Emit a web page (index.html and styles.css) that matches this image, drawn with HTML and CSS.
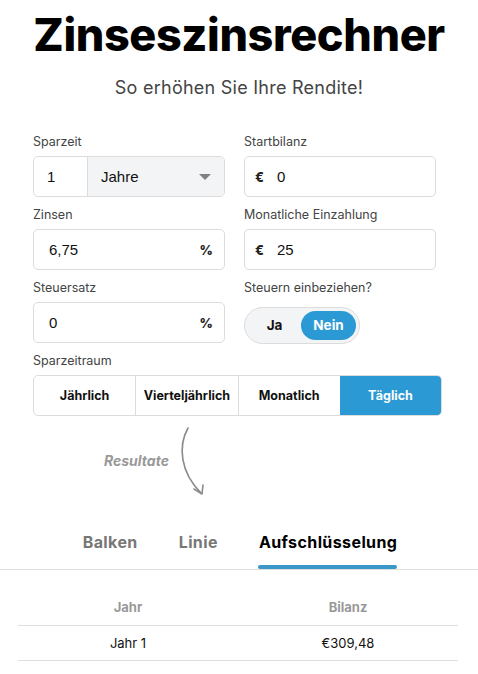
FILE: index.html
```html
<!DOCTYPE html>
<html lang="de">
<head>
<meta charset="utf-8">
<title>Zinseszinsrechner</title>
<link rel="stylesheet" href="styles.css">
</head>
<body>
<header class="head">
  <h1 class="title">Zinseszinsrechner</h1>
  <p class="subtitle">So erhöhen Sie Ihre Rendite!</p>
</header>

<form class="form">
  <div class="grid">
    <div class="field">
      <label class="label">Sparzeit</label>
      <div class="box split">
        <span class="num">1</span>
        <span class="select">Jahre<span class="caret"></span></span>
      </div>
    </div>
    <div class="field">
      <label class="label">Startbilanz</label>
      <div class="box"><span class="cur">€</span><span class="val">0</span></div>
    </div>
    <div class="field">
      <label class="label">Zinsen</label>
      <div class="box"><span class="val grow">6,75</span><span class="pct">%</span></div>
    </div>
    <div class="field">
      <label class="label">Monatliche Einzahlung</label>
      <div class="box"><span class="cur">€</span><span class="val">25</span></div>
    </div>
    <div class="field">
      <label class="label">Steuersatz</label>
      <div class="box"><span class="val grow">0</span><span class="pct">%</span></div>
    </div>
    <div class="field">
      <label class="label">Steuern einbeziehen?</label>
      <div class="toggle">
        <span class="opt">Ja</span>
        <span class="opt on">Nein</span>
      </div>
    </div>
  </div>
  <div class="field wide">
    <label class="label">Sparzeitraum</label>
    <div class="seg">
      <span class="segbtn">Jährlich</span>
      <span class="segbtn">Vierteljährlich</span>
      <span class="segbtn">Monatlich</span>
      <span class="segbtn active">Täglich</span>
    </div>
  </div>
</form>

<div class="results">
  <span class="res-label">Resultate</span>
  <svg class="arrow" width="40" height="72" viewBox="0 0 40 72">
    <path d="M12 2 C 2 20, 4 46, 25 67" fill="none" stroke="#8a8a8a" stroke-width="1.6" stroke-linecap="round"/>
    <path d="M18 63 L 26 68 L 27 59" fill="none" stroke="#8a8a8a" stroke-width="1.6" stroke-linecap="round" stroke-linejoin="round"/>
  </svg>
</div>

<nav class="tabs">
  <span class="tab">Balken</span>
  <span class="tab">Linie</span>
  <span class="tab current">Aufschlüsselung</span>
</nav>

<table class="table">
  <thead>
    <tr><th>Jahr</th><th>Bilanz</th></tr>
  </thead>
  <tbody>
    <tr><td>Jahr 1</td><td>€309,48</td></tr>
  </tbody>
</table>
</body>
</html>
```

FILE: styles.css
```css
* { box-sizing: border-box; }
html, body { margin: 0; padding: 0; background: #fff; }
body {
  font-family: "Inter", "Noto Sans", sans-serif;
  color: #111;
  width: 478px;
}
.head { text-align: center; }
.title {
  margin: 0;
  padding-top: 8px;
  font-size: 45px;
  line-height: 54px;
  font-weight: 800;
  letter-spacing: -0.4px;
  color: #000;
}
.subtitle {
  margin: 14px 0 0;
  font-size: 18px;
  line-height: 24px;
  letter-spacing: 0.25px;
  color: #444;
  font-weight: 400;
}
.form {
  margin: 34px 0 0 33px;
  width: 409px;
}
.grid {
  display: grid;
  grid-template-columns: 192px 192px;
  column-gap: 19px;
  row-gap: 10px;
}
.field { display: flex; flex-direction: column; gap: 6px; }
.field.wide { margin-top: 9px; }
.label {
  font-size: 12.5px;
  line-height: 16px;
  color: #444;
  height: 16px;
}
.box {
  height: 41px;
  border: 1px solid #dcdcdc;
  border-radius: 5px;
  display: flex;
  align-items: center;
  padding: 0 11px 0 10px;
  font-family: "Liberation Sans", Arial, sans-serif;
  font-size: 15px;
  color: #111;
}
.box.split { padding: 0; overflow: hidden; }
.num { width: 53px; padding-left: 13px; }
.select {
  flex: 1;
  align-self: stretch;
  background: #f3f4f6;
  border-left: 1px solid #dcdcdc;
  display: flex;
  align-items: center;
  justify-content: space-between;
  padding: 0 13px 0 13px;
}
.caret {
  width: 0; height: 0;
  border-left: 6px solid transparent;
  border-right: 6px solid transparent;
  border-top: 6px solid #808080;
}
.cur {
  font-family: "Inter", sans-serif;
  font-weight: 800;
  font-size: 13px;
  width: 22px;
  color: #222;
}
.val { padding-left: 0; }
.grow { flex: 1; padding-left: 5px; }
.pct {
  font-family: "Inter", sans-serif;
  font-weight: 800;
  font-size: 13px;
  color: #222;
}
.toggle {
  margin-top: 5px;
  width: 116px;
  height: 37px;
  border: 1px solid #dcdcdc;
  border-radius: 19px;
  background: #f3f4f6;
  display: flex;
  align-items: center;
  padding: 3px;
}
.opt {
  flex: 1;
  text-align: center;
  font-size: 13.5px;
  font-weight: 700;
  color: #111;
  height: 29px;
  line-height: 29px;
  border-radius: 15px;
}
.opt.on { background: #2b9ad4; color: #fff; flex: 0 0 55px; }
.seg {
  display: flex;
  height: 41px;
  border: 1px solid #dcdcdc;
  border-radius: 5px;
  overflow: hidden;
}
.segbtn {
  flex: 1;
  display: flex;
  align-items: center;
  justify-content: center;
  font-size: 12.5px;
  font-weight: 700;
  color: #111;
  border-left: 1px solid #dcdcdc;
}
.segbtn:first-child { border-left: 0; }
.segbtn.active { background: #2b9ad4; color: #fff; border-left: 0; }
.results {
  display: flex;
  align-items: center;
  margin: 10px 0 0 104px;
  height: 72px;
}
.res-label {
  font-size: 14px;
  font-style: italic;
  font-weight: 700;
  color: #999;
  width: 70px;
  margin-top: -4px;
}
.arrow { margin-left: 2px; }
.tabs {
  margin-top: 26px;
  display: flex;
  justify-content: center;
  gap: 41px;
  border-bottom: 1px solid #dedede;
  padding-left: 2px;
}
.tab {
  font-size: 16px;
  letter-spacing: 0.4px;
  font-weight: 700;
  color: #777;
  line-height: 20px;
  padding: 8px 0 17px;
  position: relative;
}
.tab.current { color: #000; }
.tab.current::after {
  content: "";
  position: absolute;
  left: -1px; right: 0; bottom: 0;
  height: 4px;
  border-radius: 2px;
  background: #3a98c9;
}
.table {
  margin: 20px 0 0 18px;
  width: 440px;
  border-collapse: collapse;
}
.table th, .table td {
  width: 50%;
  text-align: center;
  border-bottom: 1px solid #dedede;
}
.table th {
  font-size: 13px;
  font-weight: 700;
  color: #999;
  height: 35px;
  padding: 0;
}
.table td {
  font-size: 13px;
  color: #111;
  height: 35px;
  padding: 0;
}
```
